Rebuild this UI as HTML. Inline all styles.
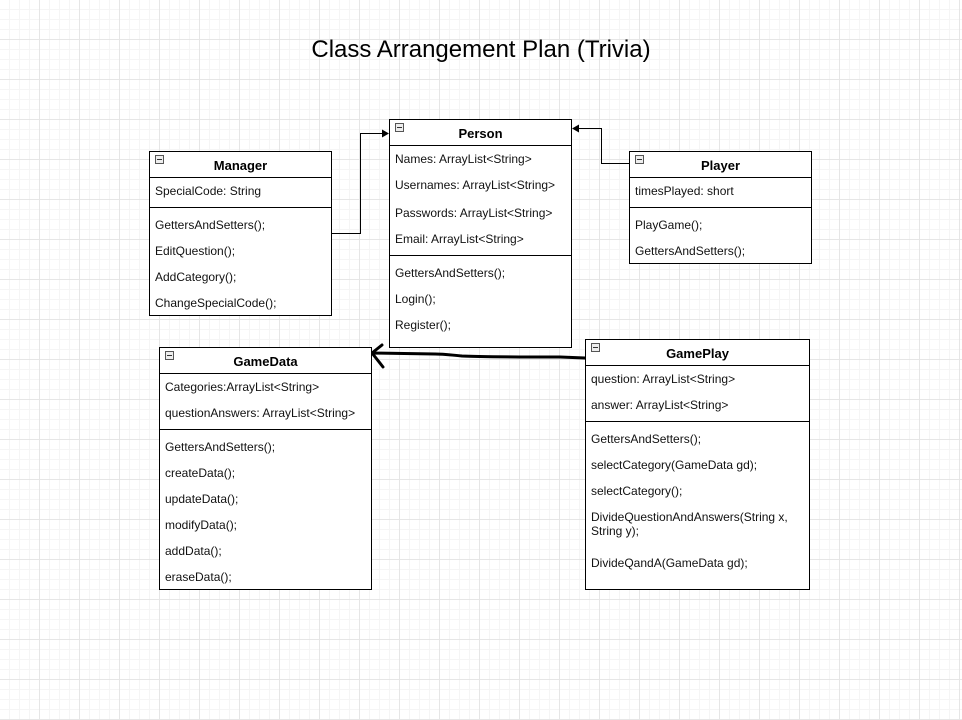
<!DOCTYPE html>
<html><head><meta charset="utf-8"><style>
body{margin:0;width:962px;height:720px;overflow:hidden;background:#fff;font-family:"Liberation Sans",Arial,sans-serif;position:relative;
background-image:linear-gradient(#e6e6e6 1px,transparent 1px),linear-gradient(90deg,#e6e6e6 1px,transparent 1px),linear-gradient(#f5f5f5 1px,transparent 1px),linear-gradient(90deg,#f5f5f5 1px,transparent 1px);
background-size:40px 40px,40px 40px,10px 10px,10px 10px;background-position:-1px -1px,-1px -1px,-1px -1px,-1px -1px;}
.b{position:absolute;border:1px solid #000;background:#fff;box-sizing:border-box}
.h{position:absolute;left:0;right:0;font-weight:bold;font-size:13px;text-align:center}
.d{position:absolute;left:0;right:0;border-top:1px solid #000}
.t{position:absolute;left:5px;font-size:12px;white-space:nowrap;color:#111}
.m{position:absolute;left:5px;top:3px;width:7px;height:7px;border:1px solid #555;background:#eee}
.m:after{content:"";position:absolute;left:1px;top:3px;width:5px;height:1px;background:#333}
.title{position:absolute;left:0;width:962px;top:36px;text-align:center;font-size:24px}
</style></head><body>
<div class="title">Class Arrangement Plan (Trivia)</div>
<svg style="position:absolute;left:0;top:0" width="962" height="720">
<g fill="none" stroke="#000" stroke-width="1"><path d="M331.5 233.5H360.5V133.5H384"/><path d="M629 163.5H601.5V128.5H577"/></g>
<path d="M389 133.5l-7-4v8z M572 128.5l7-4v8z"/>
<path d="M585 358 L560 357 C520 357 480 357 462 356 C450 355 445 354 435 354 L372 353 M382 345 L372 353 L383 367" fill="none" stroke="#000" stroke-width="3" stroke-linecap="round" stroke-linejoin="round"/>
</svg>
<div class="b" style="left:149px;top:151px;width:183px;height:165px"><div class="m"></div><div class="h" style="top:6px">Manager</div><div class="d" style="top:25px"></div><div class="t" style="top:32px">SpecialCode: String</div><div class="d" style="top:55px"></div>
<div class="t" style="top:66px">GettersAndSetters();</div><div class="t" style="top:92px">EditQuestion();</div><div class="t" style="top:118px">AddCategory();</div><div class="t" style="top:144px">ChangeSpecialCode();</div></div>
<div class="b" style="left:389px;top:119px;width:183px;height:229px"><div class="m"></div><div class="h" style="top:6px">Person</div><div class="d" style="top:25px"></div>
<div class="t" style="top:32px">Names: ArrayList&lt;String&gt;</div><div class="t" style="top:58px">Usernames: ArrayList&lt;String&gt;</div><div class="t" style="top:86px">Passwords: ArrayList&lt;String&gt;</div><div class="t" style="top:112px">Email: ArrayList&lt;String&gt;</div><div class="d" style="top:135px"></div>
<div class="t" style="top:146px">GettersAndSetters();</div><div class="t" style="top:172px">Login();</div><div class="t" style="top:198px">Register();</div></div>
<div class="b" style="left:629px;top:151px;width:183px;height:113px"><div class="m"></div><div class="h" style="top:6px">Player</div><div class="d" style="top:25px"></div><div class="t" style="top:32px">timesPlayed: short</div><div class="d" style="top:55px"></div>
<div class="t" style="top:66px">PlayGame();</div><div class="t" style="top:92px">GettersAndSetters();</div></div>
<div class="b" style="left:159px;top:347px;width:213px;height:243px"><div class="m"></div><div class="h" style="top:6px">GameData</div><div class="d" style="top:25px"></div>
<div class="t" style="top:32px">Categories:ArrayList&lt;String&gt;</div><div class="t" style="top:58px">questionAnswers: ArrayList&lt;String&gt;</div><div class="d" style="top:81px"></div>
<div class="t" style="top:92px">GettersAndSetters();</div><div class="t" style="top:118px">createData();</div><div class="t" style="top:144px">updateData();</div><div class="t" style="top:170px">modifyData();</div><div class="t" style="top:196px">addData();</div><div class="t" style="top:222px">eraseData();</div></div>
<div class="b" style="left:585px;top:339px;width:225px;height:251px"><div class="m"></div><div class="h" style="top:6px">GamePlay</div><div class="d" style="top:25px"></div>
<div class="t" style="top:32px">question: ArrayList&lt;String&gt;</div><div class="t" style="top:58px">answer: ArrayList&lt;String&gt;</div><div class="d" style="top:81px"></div>
<div class="t" style="top:92px">GettersAndSetters();</div><div class="t" style="top:118px">selectCategory(GameData gd);</div><div class="t" style="top:144px">selectCategory();</div><div class="t" style="top:170px">DivideQuestionAndAnswers(String x,</div><div class="t" style="top:184px">String y);</div><div class="t" style="top:216px">DivideQandA(GameData gd);</div></div>
</body></html>
